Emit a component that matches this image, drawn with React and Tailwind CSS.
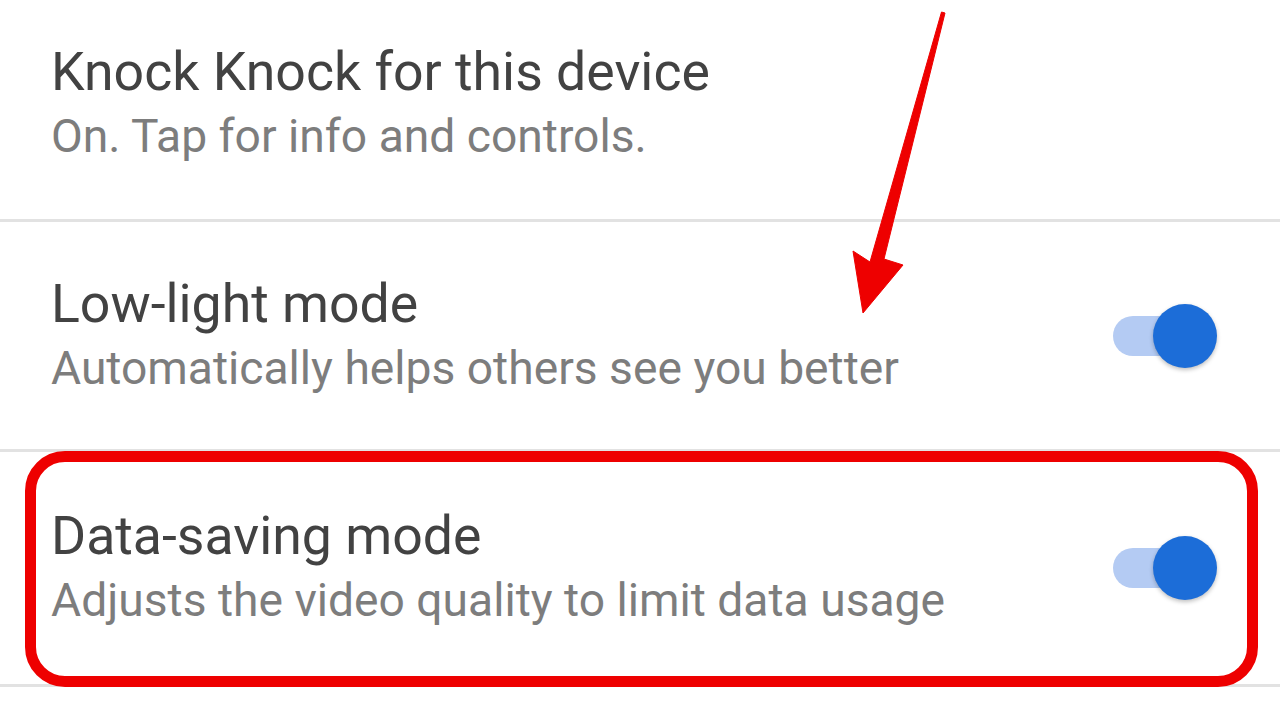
import React from 'react';

const rows = [
  {
    title: 'Knock Knock for this device',
    subtitle: 'On. Tap for info and controls.',
    toggle: false,
    height: 'h-[231px] -mt-[12px]',
  },
  {
    title: 'Low-light mode',
    subtitle: 'Automatically helps others see you better',
    toggle: true,
    height: 'h-[227px]',
  },
  {
    title: 'Data-saving mode',
    subtitle: 'Adjusts the video quality to limit data usage',
    toggle: true,
    height: 'h-[232px]',
    highlight: true,
  },
];

function Toggle() {
  return (
    <div className="relative w-[104px] h-[64px] shrink-0">
      <div className="absolute left-0 top-[12px] w-[90px] h-[40px] rounded-full bg-[#b4cbf3]" />
      <div className="absolute right-0 top-0 w-[64px] h-[64px] rounded-full bg-[#1c6dd8] shadow-[0_2px_4px_rgba(0,0,0,0.25)]" />
    </div>
  );
}

function SettingRow({ title, subtitle, toggle, height, highlight }) {
  return (
    <div className={`relative box-content flex items-center justify-between pl-[51px] pr-[63px] border-b-[3px] border-[#e2e2e2] ${height}`}>
      <div className="flex flex-col">
        <span className="text-[53.6px] leading-[60px] text-[#424242] whitespace-nowrap">{title}</span>
        <span className="mt-[4px] text-[46.2px] leading-[60px] text-[#7d7d7d] whitespace-nowrap">{subtitle}</span>
      </div>
      {toggle && <Toggle />}
      {highlight && (
        <div className="absolute left-[25px] top-[-1px] w-[1233px] h-[236px] rounded-[40px] border-[11px] border-[#ee0000] pointer-events-none" />
      )}
    </div>
  );
}

export default function App() {
  return (
    <div
      className="relative w-[1280px] h-[720px] overflow-hidden bg-white"
      style={{ fontFamily: 'Roboto, "Noto Sans", Arial, sans-serif' }}
    >
      <div className="flex flex-col">
        {rows.map((row) => (
          <SettingRow key={row.title} {...row} />
        ))}
      </div>

      {/* red annotation arrow */}
      <svg className="absolute left-0 top-0 pointer-events-none" width="1280" height="330" viewBox="0 0 1280 330">
        <polygon
          points="941.5,12 945,13 884,259 903,265 863,313 853,251 870,262"
          fill="#ee0000"
          stroke="#ee0000"
          strokeWidth="1"
          strokeLinejoin="round"
        />
      </svg>
    </div>
  );
}
